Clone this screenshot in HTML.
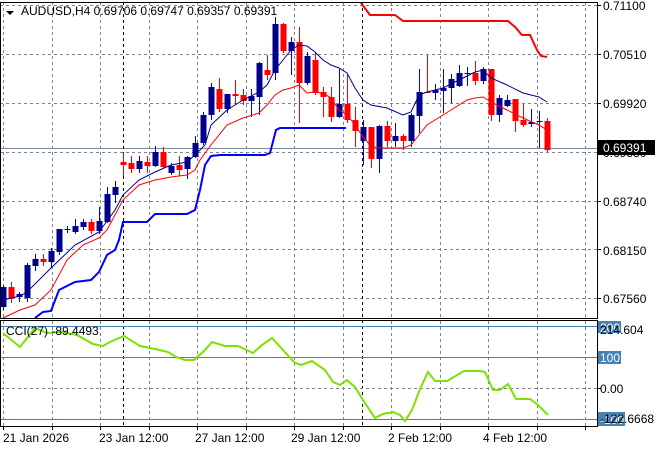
<!DOCTYPE html>
<html><head><meta charset="utf-8"><style>
html,body{margin:0;padding:0;background:#fff;}
svg{display:block;font-family:"Liberation Sans","DejaVu Sans",sans-serif;}
</style></head><body>
<svg id="s" width="660" height="450" viewBox="0 0 660 450" xmlns="http://www.w3.org/2000/svg">
<rect width="660" height="450" fill="#fff"/>
<g id="grid" stroke="#7a8591" stroke-width="1" stroke-dasharray="3,3" fill="none"></g>
<line x1="0" y1="148.5" x2="597" y2="148.5" stroke="#7f8a96" stroke-width="1"/>
<g stroke="#000" stroke-width="1" stroke-dasharray="3,3">
<line x1="123.5" y1="2" x2="123.5" y2="426"/>
<line x1="362.5" y1="2" x2="362.5" y2="426"/>
</g>
<g id="c"></g>
<polyline fill="none" stroke="#00008b" stroke-width="1" points="3,300 20,296 27,292 51,268 75,245 99,232 115,210 123,195 139,180 155,172 171,165 187,162 195,155 205,145 211,125 227,110 243,100 259,92 267,85 275,70 283,60 291,50 299,45 307,46 315,52 323,60 331,65 339,68 347,73 355,88 363,100 371,105 387,108 403,115 411,112 419,95 427,92 443,88 459,80 475,72 483,70 491,78 507,85 523,93 539,97 547,102"/>
<polyline fill="none" stroke="#ff0000" stroke-width="1" points="3,318 20,310 35,305 51,290 67,260 83,245 99,238 107,230 115,215 123,200 139,185 155,180 171,177 187,175 195,170 200,160 211,145 227,125 243,118 259,113 267,105 275,95 283,90 291,88 299,85 307,93 315,92 323,93 331,98 339,110 347,115 355,125 363,137 371,146 379,148 403,148 411,145 419,135 427,125 435,120 451,110 467,100 475,98 483,97 491,102 507,110 523,118 539,125 547,130"/>
<polyline fill="none" stroke="#0000ff" stroke-width="2" points="35,318 43,312 51,311 59,290 75,282 91,280 99,272 107,255 115,250 119,240 123,222 147,222 155,214 187,214 195,210 200,190 205,165 211,156 220,155 265,155 270,153 276,130 280,128 346,128"/>
<polyline fill="none" stroke="#ff0000" stroke-width="2" points="361,3 370,15 395,15 403,21 508,21 515,27 522,35 530,35 537,50 541,56 547,57"/>
<!-- CCI -->
<g stroke="#4682b4" stroke-width="1">
<line x1="0" y1="326.5" x2="597" y2="326.5"/>
<line x1="0" y1="357.5" x2="597" y2="357.5"/>
<line x1="0" y1="419.5" x2="597" y2="419.5"/>
</g>
<line x1="0" y1="388.5" x2="597" y2="388.5" stroke="#7a8591" stroke-dasharray="3,3"/>
<polyline fill="none" stroke="#7fe000" stroke-width="2" points="3,333 20,347 35,328 47,333 62,332 77,335 93,344 103,346 110,342 124,336 140,346 155,349 168,352 176,357 185,360 194,360 205,350 212,342 225,346 238,346 253,353 262,345 272,338 283,350 295,363 301,365 312,361 325,370 333,382 340,385 347,380 355,387 363,400 375,418 383,414 393,412 400,415 405,421 412,410 420,389 428,372 435,381 447,381 464,371 480,371 485,372 493,390 500,390 508,384 516,399 530,399 538,405 548,415"/>
<!-- frames -->
<g fill="none" stroke="#000" stroke-width="1">
<rect x="0.5" y="2.5" width="597" height="316"/>
<rect x="0.5" y="320.5" width="597" height="106"/>
</g>
<g id="ticks" stroke="#000"></g>
<!-- header -->
<polygon points="6,11 14,11 10,15" fill="#000"/>
<text x="21" y="15" font-size="12" fill="#000">AUDUSD,H4  0.69706 0.69747 0.69357 0.69391</text>
<text x="6" y="335" font-size="12" fill="#000">CCI(27) -89.4493</text>
<!-- price scale -->
<g font-size="12" fill="#000">
<text x="603" y="10">0.71100</text>
<text x="603" y="59">0.70510</text>
<text x="603" y="108">0.69920</text>
<text x="603" y="157">0.69330</text>
<text x="603" y="206">0.68740</text>
<text x="603" y="255">0.68150</text>
<text x="603" y="303">0.67560</text>
</g>
<rect x="598" y="140" width="57" height="15" fill="#000"/>
<text x="603" y="152" font-size="12" fill="#fff">0.69391</text>
<rect x="598" y="321" width="23" height="12" fill="#4682b4"/>
<text x="600" y="332" font-size="12" fill="#fff">200</text>
<text x="600" y="334" font-size="12" fill="#000">214.604</text>
<rect x="598" y="351" width="23" height="13" fill="#4682b4"/>
<text x="600" y="362" font-size="12" fill="#fff">100</text>
<text x="600" y="393" font-size="12" fill="#000">0.00</text>
<rect x="598" y="412" width="27" height="14" fill="#4682b4"/>
<text x="600" y="424" font-size="12" fill="#fff">-100</text>
<text x="600" y="423" font-size="12" fill="#000">-122.6668</text>
<!-- time axis -->
<g font-size="12" fill="#000">
<text x="3" y="442">21 Jan 2026</text>
<text x="99" y="442">23 Jan 12:00</text>
<text x="195" y="442">27 Jan 12:00</text>
<text x="291" y="442">29 Jan 12:00</text>
<text x="388" y="442">2 Feb 12:00</text>
<text x="483" y="442">4 Feb 12:00</text>
</g>
</svg>
<script>
var NS="http://www.w3.org/2000/svg";
function el(p,n,a){var e=document.createElementNS(NS,n);for(var k in a)e.setAttribute(k,a[k]);p.appendChild(e);return e;}
var g=document.getElementById('grid');
for(var x=3;x<597;x+=48.5){var xx=Math.round(x)+0.5;el(g,'line',{x1:xx,y1:2,x2:xx,y2:318});el(g,'line',{x1:xx,y1:321,x2:xx,y2:426});}
[5,54,103,152,201,249,298].forEach(function(y){el(g,'line',{x1:0,y1:y+.5,x2:597,y2:y+.5});});
var t=document.getElementById('ticks');
[5,54,103,152,201,249,298,326,357,388,419].forEach(function(y){el(t,'line',{x1:597,y1:y+.5,x2:601,y2:y+.5});});
for(var x=3;x<597;x+=48.5){var xx=Math.round(x)+0.5;el(t,'line',{x1:xx,y1:426,x2:xx,y2:430});}
// x, color(b/r), bodyTop, bodyBot, high, low
var C=[[3,'b',287,307,285,310],[11,'r',287,298,282,303],[19,'b',294,297,292,302],[27,'b',265,298,263,302],[35,'b',259,266,254,271],[43,'r',259,262,254,266],[51,'b',251,262,248,267],[59,'b',229,252,229,255],[67,'b',229,229,226,233],[75,'b',226,232,219,234],[83,'b',222,227,219,230],[91,'r',222,231,219,234],[99,'b',221,231,207,234],[107,'b',194,222,187,223],[115,'b',187,195,181,203],[123,'r',162,165,153,176],[131,'r',163,169,156,173],[139,'b',161,169,156,173],[147,'r',162,166,156,173],[155,'b',152,166,146,167],[163,'r',152,167,147,168],[171,'b',166,173,163,175],[179,'r',165,170,156,176],[187,'b',157,169,156,179],[195,'b',143,157,136,158],[203,'b',115,143,112,145],[211,'b',87,115,83,120],[219,'r',89,109,78,112],[227,'b',94,109,94,113],[235,'r',94,96,80,105],[243,'r',95,101,89,105],[251,'b',96,101,89,117],[259,'b',63,97,62,115],[267,'r',70,75,55,80],[275,'b',24,73,17,80],[283,'r',24,51,23,53],[291,'b',42,51,37,75],[299,'r',42,83,27,123],[307,'b',56,83,52,85],[315,'r',60,93,52,95],[323,'r',92,97,87,117],[331,'r',97,117,87,122],[339,'b',104,117,69,118],[347,'r',104,120,75,123],[355,'r',120,131,107,147],[363,'b',127,141,120,165],[371,'r',127,159,127,168],[379,'b',126,159,125,173],[387,'r',126,141,121,147],[395,'b',136,141,123,147],[403,'r',136,141,134,150],[411,'b',115,141,113,147],[419,'b',92,116,69,133],[427,'r',92,93,55,93],[435,'b',90,93,84,100],[443,'b',88,91,69,113],[451,'b',79,88,74,103],[459,'b',73,86,65,87],[467,'b',73,74,67,86],[475,'r',73,81,61,85],[483,'b',69,81,67,84],[491,'r',69,115,69,121],[499,'b',98,115,95,122],[507,'b',100,106,95,107],[515,'r',99,121,99,132],[523,'r',120,125,104,127],[531,'b',122,124,109,127],[539,'b',121,122,111,148],[547,'r',121,150,118,152]];
var cg=document.getElementById('c');
C.forEach(function(c){var col=c[1]=='b'?(c[3]-c[2]>2?'#00008b':'#0000ff'):'#ff0000';var fill=c[1]=='b'?'#00008b':'#ff0000';var wc=c[1]=='b'?'#0000ff':'#ff0000';
el(cg,'line',{x1:c[0]+.5,y1:c[4],x2:c[0]+.5,y2:c[5],stroke:wc,'stroke-width':1});
var h=Math.max(1,c[3]-c[2]);el(cg,'rect',{x:c[0]-2.5,y:c[2],width:6,height:h,fill:fill,stroke:wc,'stroke-width':0});});
</script>
</body></html>
